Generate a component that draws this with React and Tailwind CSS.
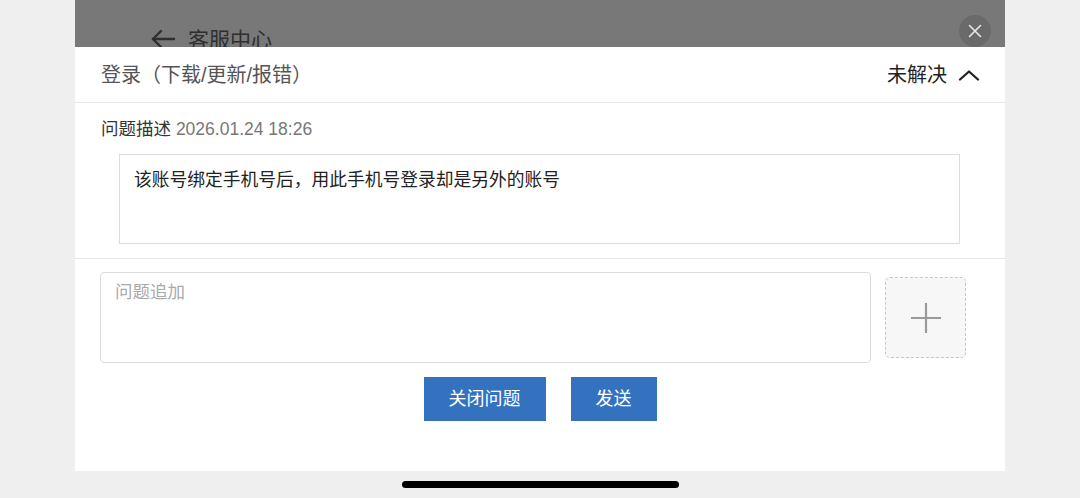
import React from "react";

const cjk = { fontFamily: '"Liberation Sans", "Noto Sans CJK SC", sans-serif' };

function BackArrow() {
  return (
    <svg width="26" height="20" viewBox="0 0 26 20" fill="none" stroke="#2f2f2f" strokeWidth="2.4" strokeLinecap="round" strokeLinejoin="round">
      <path d="M24 10H3" />
      <path d="M11 2L3 10l8 8" />
    </svg>
  );
}

function ChevronUp() {
  return (
    <svg width="22" height="12" viewBox="0 0 22 12" fill="none" stroke="#222" strokeWidth="2.3" strokeLinecap="round" strokeLinejoin="round">
      <path d="M2 10.5L11 2.5l9 8" />
    </svg>
  );
}

function CloseIcon() {
  return (
    <svg width="14" height="14" viewBox="0 0 14 14" fill="none" stroke="#e8e8e8" strokeWidth="1.6" strokeLinecap="round">
      <path d="M1.5 1.5l11 11M12.5 1.5l-11 11" />
    </svg>
  );
}

function PlusIcon() {
  return (
    <svg width="30" height="30" viewBox="0 0 30 30" fill="none" stroke="#9a9a9a" strokeWidth="2.2">
      <path d="M15 0v30M0 15h30" />
    </svg>
  );
}

export default function App() {
  return (
    <div className="w-[1080px] h-[498px] bg-[#efefef] flex flex-col overflow-hidden" style={cjk}>
      <div className="w-[930px] ml-[75px] flex flex-col">
        {/* dimmed page header behind the sheet */}
        <div className="relative h-[47px] bg-[#787878] overflow-hidden">
          <div className="h-[56px] mt-[11px] pl-[75px] flex items-center gap-[12px]">
            <BackArrow />
            <span className="text-[21px] text-[#2f2f2f] leading-none">客服中心</span>
          </div>
          <button className="absolute right-[14px] top-[15px] w-[32px] h-[32px] rounded-full bg-[#6a6a6a] flex items-center justify-center">
            <CloseIcon />
          </button>
        </div>

        {/* ticket sheet */}
        <div className="h-[424px] bg-white flex flex-col">
          <div className="h-[56px] flex items-center justify-between pl-[26px] pr-[25px] border-b border-[#e6e6e6]">
            <span className="text-[20px] text-[#555]">登录（下载/更新/报错）</span>
            <div className="flex items-center gap-[11px]">
              <span className="text-[20px] text-[#222]">未解决</span>
              <ChevronUp />
            </div>
          </div>

          <div className="pt-[14px] pb-[14px] border-b border-[#e6e6e6]">
            <div className="pl-[26px] text-[17.5px] leading-6 text-[#333]">
              问题描述 <span className="text-[#777]">2026.01.24 18:26</span>
            </div>
            <div className="mt-[13px] ml-[44px] mr-[45px] h-[90px] border border-[#dcdcdc] pt-[13px] pl-[14px] text-[17.75px] leading-6 text-[#222]">
              该账号绑定手机号后，用此手机号登录却是另外的账号
            </div>
          </div>

          <div className="pt-[13px] pl-[25px] pr-[39px] flex items-start gap-[14px]">
            <textarea
              className="w-[771px] h-[91px] border border-[#dcdcdc] rounded-[4px] pt-[7px] px-[14px] text-[17.5px] leading-6 text-[#222] placeholder:text-[#aaa] resize-none outline-none"
              style={cjk}
              placeholder="问题追加"
            />
            <div className="mt-[5px] w-[81px] h-[81px] border border-dashed border-[#c8c8c8] rounded-[5px] bg-[#f7f7f7] flex items-center justify-center">
              <PlusIcon />
            </div>
          </div>

          <div className="mt-[14px] flex justify-center gap-[25px]">
            <button className="w-[122px] h-[44px] bg-[#3472c0] text-white text-[18px]">关闭问题</button>
            <button className="w-[86px] h-[44px] bg-[#3472c0] text-white text-[18px]">发送</button>
          </div>
        </div>
      </div>

      <div className="flex-1 flex justify-center pt-[10px]">
        <div className="w-[277px] h-[7px] rounded-full bg-black" />
      </div>
    </div>
  );
}
